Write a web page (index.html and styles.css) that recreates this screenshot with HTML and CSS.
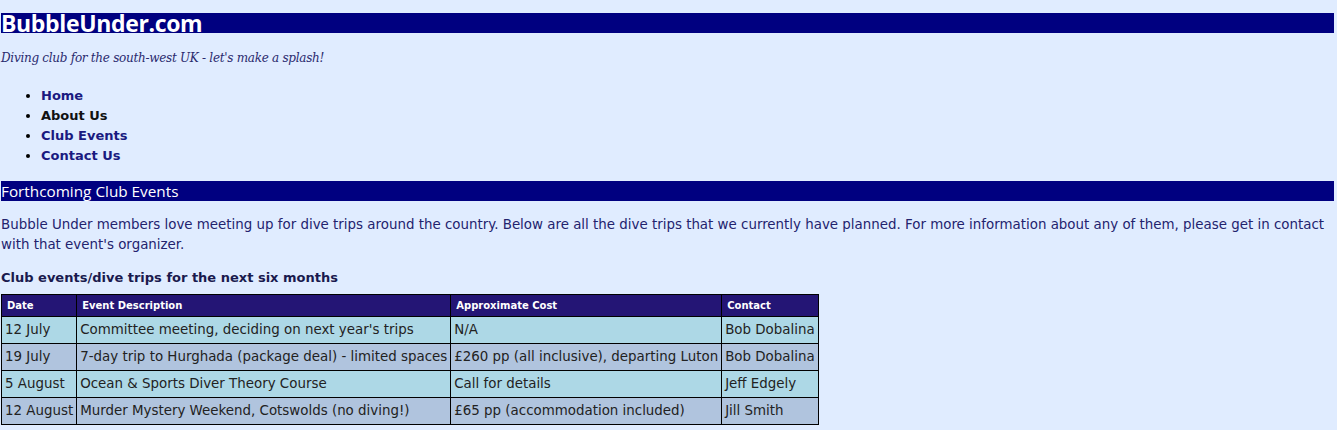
FILE: index.html
```html
<!DOCTYPE html>
<html lang="en">
<head>
<meta charset="utf-8">
<title>Club Events - BubbleUnder.com</title>
<link rel="stylesheet" href="styles.css">
</head>
<body>
<div class="header">
  <div class="sitebranding">
    <h1 class="site-title">BubbleUnder.com</h1>
    <p class="tagline">Diving club for the south-west UK - let's make a splash!</p>
  </div>
  <ul class="navigation">
    <li><a class="nav-link" href="#">Home</a></li>
    <li><a class="nav-link nav-visited" href="#">About Us</a></li>
    <li><a class="nav-link" href="#">Club Events</a></li>
    <li><a class="nav-link" href="#">Contact Us</a></li>
  </ul>
</div>
<div class="bodycontent">
  <h2 class="section-title">Forthcoming Club Events</h2>
  <p class="intro">Bubble Under members love meeting up for dive trips around the country. Below are all the dive trips that we currently have planned. For more information about any of them, please get in contact with that event's organizer.</p>
  <h3 class="table-title">Club events/dive trips for the next six months</h3>
  <table class="events">
    <thead>
      <tr>
        <th class="col-date">Date</th>
        <th class="col-desc">Event Description</th>
        <th class="col-cost">Approximate Cost</th>
        <th class="col-contact">Contact</th>
      </tr>
    </thead>
    <tbody>
      <tr class="odd">
        <td>12 July</td>
        <td>Committee meeting, deciding on next year's trips</td>
        <td>N/A</td>
        <td>Bob Dobalina</td>
      </tr>
      <tr class="even">
        <td>19 July</td>
        <td>7-day trip to Hurghada (package deal) - limited spaces</td>
        <td>£260 pp (all inclusive), departing Luton</td>
        <td>Bob Dobalina</td>
      </tr>
      <tr class="odd">
        <td>5 August</td>
        <td>Ocean &amp; Sports Diver Theory Course</td>
        <td>Call for details</td>
        <td>Jeff Edgely</td>
      </tr>
      <tr class="even">
        <td>12 August</td>
        <td>Murder Mystery Weekend, Cotswolds (no diving!)</td>
        <td>£65 pp (accommodation included)</td>
        <td>Jill Smith</td>
      </tr>
    </tbody>
  </table>
</div>
</body>
</html>
```
FILE: styles.css
```css
html {
  background: #e0ecff;
}
body {
  margin: 0;
  padding: 0 3px 0 1px;
  background: #e0ecff;
  color: #23236e;
  font-family: "DejaVu Sans", Verdana, sans-serif;
  font-size: 13.4px;
  line-height: 20px;
}
.site-title {
  margin: 13px 0 0;
  background: #000080;
  color: #ffffff;
  font-family: "Open Sans", "DejaVu Sans", sans-serif;
  font-weight: 700;
  font-size: 23px;
  line-height: 20px;
  height: 20px;
  letter-spacing: -0.35px;
}
.tagline {
  margin: 15px 0 0;
  font-family: "DejaVu Serif", Georgia, serif;
  font-style: italic;
  font-size: 12px;
  letter-spacing: -0.28px;
  line-height: 20px;
  color: #2a2a6e;
}
.navigation {
  margin: 18px 0 0;
  padding: 0 0 0 40px;
  font-size: 13px;
}
.navigation li {
  line-height: 20px;
  color: #000;
}
.nav-link {
  font-weight: 700;
  color: #1a1a80;
  text-decoration: none;
}
.nav-visited {
  color: #111;
}
.section-title {
  margin: 15px 0 0;
  background: #000080;
  color: #ffffff;
  font-family: "Open Sans", "DejaVu Sans", sans-serif;
  font-weight: 400;
  font-size: 15.3px;
  line-height: 20px;
  height: 20px;
}
.intro {
  margin: 14px 0 0;
}
.table-title {
  margin: 13px 0 0;
  font-size: 13px;
  line-height: 20px;
  font-weight: 700;
  color: #1a1a4e;
}
.events {
  margin-top: 6px;
  border-collapse: collapse;
  border: 1px solid #000;
  color: #222;
  font-size: 13.4px;
}
.events th {
  background: #241575;
  color: #ffffff;
  font-size: 10px;
  font-weight: 700;
  text-align: left;
  padding: 0 5px;
  height: 21px;
  border: 1px solid #000;
  line-height: 14px;
}
.events td {
  border: 1px solid #000;
  padding: 0 3px;
  height: 26px;
  white-space: nowrap;
}
.events .odd td {
  background: #add8e6;
}
.events .even td {
  background: #b0c4de;
}
```
